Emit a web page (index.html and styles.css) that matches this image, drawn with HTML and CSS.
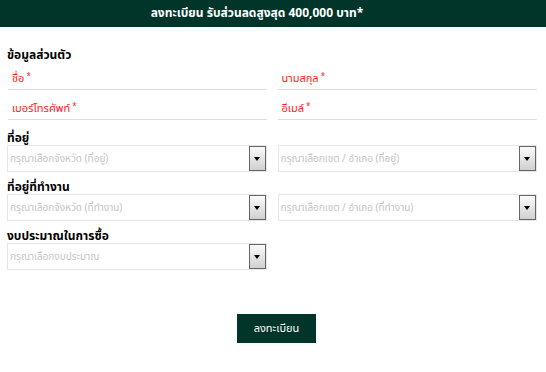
FILE: index.html
```html
<!DOCTYPE html>
<html lang="th">
<head>
    <meta charset="UTF-8">
    <meta name="viewport" content="width=device-width, initial-scale=1.0">
    <title>ลงทะเบียน</title>
    <link rel="stylesheet" href="styles.css">
</head>
<body>
    <header class="topbar">ลงทะเบียน รับส่วนลดสูงสุด 400,000 บาท*</header>
    <main class="form-wrap">
        <h2 class="section-title">ข้อมูลส่วนตัว</h2>
        <div class="row">
            <div class="field">ชื่อ<sup>*</sup></div>
            <div class="field">นามสกุล<sup>*</sup></div>
        </div>
        <div class="row">
            <div class="field">เบอร์โทรศัพท์<sup>*</sup></div>
            <div class="field">อีเมล์<sup>*</sup></div>
        </div>

        <h2 class="section-title gap-lg">ที่อยู่</h2>
        <div class="row">
            <div class="select"><span class="placeholder">กรุณาเลือกจังหวัด (ที่อยู่)</span><span class="arrow"></span></div>
            <div class="select"><span class="placeholder">กรุณาเลือกเขต / อำเภอ (ที่อยู่)</span><span class="arrow"></span></div>
        </div>

        <h2 class="section-title">ที่อยู่ที่ทำงาน</h2>
        <div class="row">
            <div class="select"><span class="placeholder">กรุณาเลือกจังหวัด (ที่ทำงาน)</span><span class="arrow"></span></div>
            <div class="select"><span class="placeholder">กรุณาเลือกเขต / อำเภอ (ที่ทำงาน)</span><span class="arrow"></span></div>
        </div>

        <h2 class="section-title">งบประมาณในการซื้อ</h2>
        <div class="row">
            <div class="select"><span class="placeholder">กรุณาเลือกงบประมาณ</span><span class="arrow"></span></div>
            <div></div>
        </div>

        <div class="actions">
            <button class="submit">ลงทะเบียน</button>
        </div>
    </main>
</body>
</html>
```
FILE: styles.css
```css
body {
    font-family: "Noto Sans Thai", "Noto Sans Thai UI", Tahoma, "Noto Sans", sans-serif;
    margin: 0;
    padding: 0;
    background: #fff;
}

/* Bandeau vert */
.topbar {
    background-color: #01352a;
    color: #fff;
    font-weight: bold;
    font-size: 12px;
    height: 27px;
    line-height: 27px;
    text-align: center;
    padding-right: 32px;
}

/* Formulaire */
.form-wrap {
    padding: 17px 9px 0 7px;
}

.section-title {
    font-size: 12px;
    font-weight: bold;
    color: #000;
    margin: 4px 0 0;
    height: 16px;
    line-height: 22px;
}

.section-title:first-child {
    margin-top: 0;
}

.section-title.gap-lg {
    margin-top: 7px;
}

.row {
    display: grid;
    grid-template-columns: 1fr 1fr;
    column-gap: 11px;
}

.field {
    color: #ff1a1a;
    font-size: 11px;
    height: 25px;
    padding-top: 4px;
    line-height: 26px;
    padding-left: 4px;
    margin-left: 1px;
    border-bottom: 1px solid #dcdcdc;
}

.field + .field {
    margin-left: 0;
}

.field sup {
    font-size: 8px;
    margin-left: 2px;
    vertical-align: 3px;
}

.select {
    display: flex;
    align-items: center;
    justify-content: space-between;
    height: 27px;
    border: 1px solid #e6e6e6;
    box-sizing: border-box;
    margin-top: 2px;
    padding: 0 0 0 2px;
}

.placeholder {
    color: #c4c4c4;
    font-size: 10px;
}

.arrow {
    position: relative;
    width: 15px;
    height: 23px;
    border: 1px solid #666;
    background: linear-gradient(#fafafa, #d0d0d0);
}

.arrow::after {
    content: "";
    position: absolute;
    left: 4px;
    top: 10px;
    border-left: 3.5px solid transparent;
    border-right: 3.5px solid transparent;
    border-top: 4px solid #000;
}

.actions {
    text-align: center;
    padding-top: 44px;
    padding-left: 9px;
}

.submit {
    background-color: #01352a;
    color: #fff;
    font-family: inherit;
    font-size: 11px;
    width: 79px;
    height: 29px;
    border: none;
    cursor: pointer;
}
```
